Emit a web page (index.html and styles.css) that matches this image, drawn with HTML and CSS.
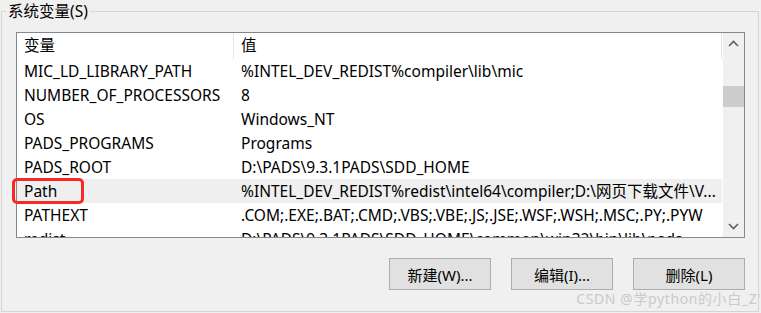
FILE: index.html
```html
<!DOCTYPE html>
<html>
    <head>
        <link rel="stylesheet" href="styles.css">
    </head>
    <body>
        <fieldset class="group">
            <legend>系统变量(S)</legend>
            <div class="listwrap">
                <div class="list">
                    <div class="table">
                        <div class="row head">
                            <div class="cell">变量</div>
                            <div class="cell">值</div>
                        </div>
                        <div class="row">
                            <div class="cell">MIC_LD_LIBRARY_PATH</div>
                            <div class="cell">%INTEL_DEV_REDIST%compiler\lib\mic</div>
                        </div>
                        <div class="row">
                            <div class="cell">NUMBER_OF_PROCESSORS</div>
                            <div class="cell">8</div>
                        </div>
                        <div class="row">
                            <div class="cell">OS</div>
                            <div class="cell">Windows_NT</div>
                        </div>
                        <div class="row">
                            <div class="cell">PADS_PROGRAMS</div>
                            <div class="cell">Programs</div>
                        </div>
                        <div class="row">
                            <div class="cell">PADS_ROOT</div>
                            <div class="cell">D:\PADS\9.3.1PADS\SDD_HOME</div>
                        </div>
                        <div class="row selected">
                            <div class="cell">Path</div>
                            <div class="cell">%INTEL_DEV_REDIST%redist\intel64\compiler;D:\网页下载文件\V...</div>
                        </div>
                        <div class="row">
                            <div class="cell">PATHEXT</div>
                            <div class="cell">.COM;.EXE;.BAT;.CMD;.VBS;.VBE;.JS;.JSE;.WSF;.WSH;.MSC;.PY;.PYW</div>
                        </div>
                        <div class="row">
                            <div class="cell">redist</div>
                            <div class="cell">D:\PADS\9.3.1PADS\SDD_HOME\common\win32\bin\lib\pads</div>
                        </div>
                    </div>
                    <div class="scrollbar">
                        <div class="arrow">
                            <svg width="11" height="7" viewBox="0 0 11 7"><path d="M1 6 L5.5 1.5 L10 6" fill="none" stroke="#606060" stroke-width="1.6"/></svg>
                        </div>
                        <div class="track"><div class="thumb"></div></div>
                        <div class="arrow">
                            <svg width="11" height="7" viewBox="0 0 11 7"><path d="M1 1 L5.5 5.5 L10 1" fill="none" stroke="#606060" stroke-width="1.6"/></svg>
                        </div>
                    </div>
                </div>
                <span class="mark"></span>
            </div>
            <div class="buttons">
                <button>新建(W)...</button>
                <button>编辑(I)...</button>
                <button class="wide">删除(L)</button>
            </div>
        </fieldset>
        <div class="watermark">CSDN @学python的小白_Z'</div>
    </body>
</html>
```
FILE: styles.css
```css
body {
    margin: 0;
    background-color: #f0f0f0;
    font-family: "Noto Sans", "Noto Sans CJK SC", sans-serif;
    font-size: 15.5px;
    color: #000;
    overflow: hidden;
}
fieldset.group {
    margin: 1px 2px 0 1px;
    padding: 0;
    border: 1px solid #d5d5d5;
    height: 311px;
    box-sizing: border-box;
    min-width: 0;
}
legend {
    margin-left: 4px;
    padding: 0 2px;
    line-height: 20px;
}
.listwrap {
    position: relative;
    margin: 11px 0 0 14px;
    width: 729px;
}
.list {
    display: flex;
    height: 206px;
    box-sizing: border-box;
    border: 1px solid #828790;
    background-color: #fff;
    overflow: hidden;
}
.table {
    flex: 1;
    min-width: 0;
}
.row {
    display: grid;
    grid-template-columns: 217px 1fr;
    height: 24px;
    line-height: 25px;
}
.row.head {
    height: 26px;
    line-height: 25px;
    border-right: 1px solid #e5e5e5;
}
.row.head .cell:first-child {
    border-right: 1px solid #e5e5e5;
}
.row.selected {
    background-color: #efefef;
}
.cell {
    padding-left: 7px;
    white-space: nowrap;
    overflow: hidden;
}
.scrollbar {
    width: 21px;
    margin-left: 1px;
    background-color: #f0f0f0;
    display: flex;
    flex-direction: column;
}
.arrow {
    height: 21px;
    display: flex;
    align-items: center;
    justify-content: center;
}
.track {
    flex: 1;
}
.thumb {
    margin-top: 32px;
    height: 21px;
    background-color: #cdcdcd;
}
.mark {
    position: absolute;
    left: -4px;
    top: 146px;
    width: 72px;
    height: 26px;
    box-sizing: border-box;
    border: 3px solid #f42a2a;
    border-radius: 5px;
}
.buttons {
    display: flex;
    justify-content: flex-end;
    gap: 20px;
    width: 743px;
    margin-top: 20px;
}
button {
    width: 102px;
    height: 32px;
    font-family: inherit;
    font-size: 15px;
    background-color: #e1e1e1;
    border: 1px solid #adadad;
    border-radius: 0;
    padding: 0;
}
button.wide {
    width: 112px;
}
.watermark {
    position: absolute;
    right: 0;
    bottom: 5px;
    font-size: 14px;
    letter-spacing: 0.6px;
    color: #cacaca;
}
```
